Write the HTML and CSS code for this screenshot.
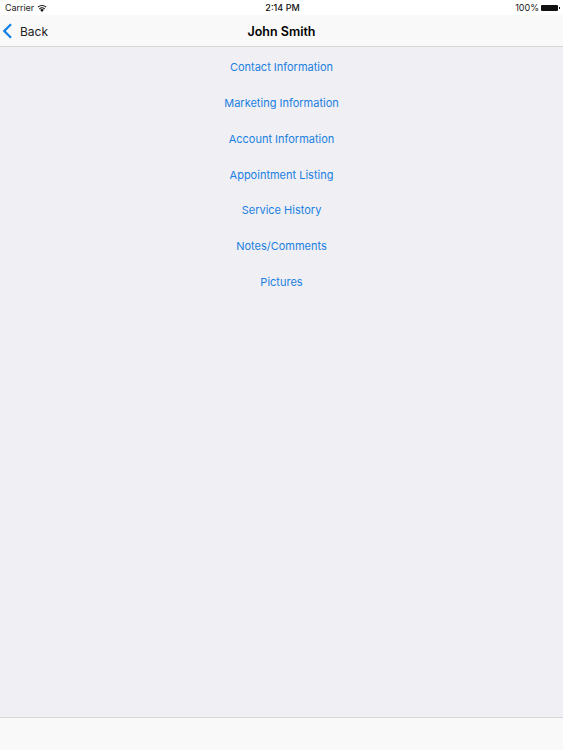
FILE: index.html
```html
<!DOCTYPE html>
<html lang="en">
<head>
<meta charset="utf-8">
<title>John Smith</title>
<link rel="stylesheet" href="styles.css">
</head>
<body>
<div class="app">
  <header class="top">
    <div class="status">
      <div class="status-left">
        <span>Carrier</span>
        <svg class="wifi" width="10" height="8" viewBox="0 0 10 8"><path d="M5 8 3.200 5.900a2.600 2.600 0 0 1 3.600 0Z" fill="#111"/><path d="M2.400 5a3.800 3.800 0 0 1 5.200 0M.9 3.100A6 6 0 0 1 9.100 3.100" fill="none" stroke="#111" stroke-width="1.100"/></svg>
      </div>
      <div class="status-time">2:14 PM</div>
      <div class="status-right">
        <span>100%</span>
        <span class="battery"></span>
      </div>
    </div>
    <nav class="nav">
      <a class="back">
        <svg class="chev" width="11" height="16" viewBox="0 0 11 16"><path d="M9 1.200 2.300 8 9 14.800" fill="none" stroke="#1380e4" stroke-width="2.300"/></svg>
        <span>Back</span>
      </a>
      <div class="title">John Smith</div>
    </nav>
  </header>
  <main class="menu">
    <a class="item">Contact Information</a>
    <a class="item">Marketing Information</a>
    <a class="item">Account Information</a>
    <a class="item">Appointment Listing</a>
    <a class="item">Service History</a>
    <a class="item">Notes/Comments</a>
    <a class="item">Pictures</a>
  </main>
  <footer class="bottom"></footer>
</div>
</body>
</html>
```
FILE: styles.css
```css
* { box-sizing: border-box; }
html, body { margin: 0; height: 100%; }
body { font-family: "Inter", "Liberation Sans", Arial, sans-serif; overflow: hidden; }
.app { width: 563px; height: 750px; display: flex; flex-direction: column; background: #efeff4; }
.top { background: #f9f9f9; border-bottom: 1px solid #d8d8da; height: 47px; flex: none; }
.status { height: 15px; background: #fff; display: grid; grid-template-columns: 1fr auto 1fr; align-items: center; padding: 0 5px 0 5px; font-size: 9px; color: #222; }
.status-left { display: flex; align-items: center; gap: 3px; letter-spacing: -0.05px; }
.status-time { font-weight: 500; color: #111; padding-left: 2px; }
.status-right { display: flex; align-items: center; justify-content: flex-end; gap: 2px; }
.battery { width: 17px; height: 6px; background: #111; border-radius: 1px; position: relative; }
.battery::after { content: ""; position: absolute; right: -2px; top: 2px; width: 1.500px; height: 2px; background: #111; }
.nav { height: 31px; display: flex; align-items: center; justify-content: center; position: relative; padding-top: 1px; }
.back { position: absolute; left: 2px; top: 0; height: 32px; display: flex; align-items: center; gap: 7px; font-size: 12px; color: #222; }
.chev { display: block; }
.title { font-size: 12.500px; font-weight: 600; color: #000; }
.menu { flex: 1; display: flex; flex-direction: column; align-items: center; padding-top: 2.400px; }
.item { height: 35.800px; display: flex; align-items: center; font-size: 11px; color: #1a7fe0; }
.bottom { height: 33px; flex: none; background: #f9f9f9; border-top: 1px solid #d8d8da; }
```
